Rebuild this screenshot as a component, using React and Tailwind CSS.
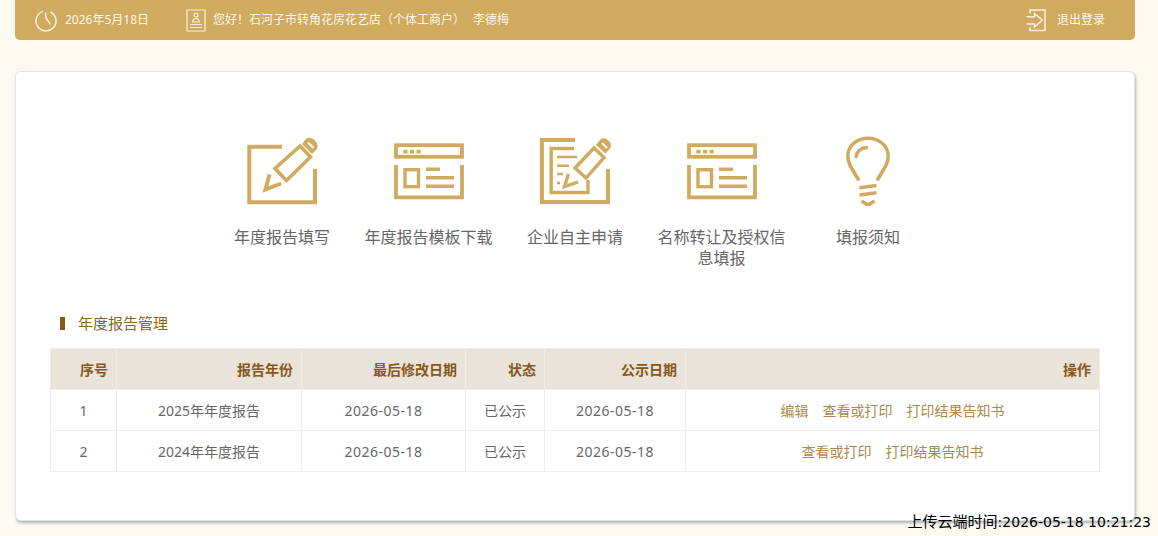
import React from "react";

const font = { fontFamily: '"Noto Sans", "Noto Sans CJK SC", sans-serif' };

function IconEdit() {
  return (
    <svg width="72" height="70" viewBox="246 136 72 70" fill="none" stroke="#d0ab5f" strokeWidth="4">
      <path d="M282 146.8H249.3V202.3H315V169" />
      <path d="M275 168.5L300 146L310.5 157L286.5 180.5Z" strokeWidth="3.6" />
      <path d="M269.5 174.5L265.5 189.5L281 183.5" strokeWidth="4" />
      <path d="M302 144L306 139Q309.5 136.5 314 139.5Q319 144 317 149L312 154Z" fill="#d0ab5f" stroke="none" />
      <path d="M308 142.5L313.5 148" stroke="#fff" strokeWidth="2.2" />
    </svg>
  );
}

function IconPage() {
  return (
    <svg width="72" height="70" viewBox="392 136 72 70" fill="none" stroke="#d0ab5f" strokeWidth="3.8">
      <rect x="395" y="145.2" width="66" height="11.6" />
      <path d="M402.3 151.7h4.2M409 151.7h4.2M415.5 151.7h4.2" strokeWidth="3.8" />
      <path d="M395 165V197.3H461V165" />
      <rect x="404" y="169.7" width="13.5" height="17" strokeWidth="3.4" />
      <path d="M425 169.3H439M425 177.8H453M425 186.2H453" strokeWidth="3.4" />
    </svg>
  );
}

function IconForm() {
  return (
    <svg width="72" height="70" viewBox="539 136 72 70" fill="none" stroke="#d0ab5f" strokeWidth="4">
      <path d="M575 140H541.9V202H608V169" />
      <path d="M574 148.5H551.2V192.5H588V180" strokeWidth="3.4" />
      <path d="M557 157H577M557 165.7H569M557 174H563M557 183H560" strokeWidth="2.4" />
      <path d="M575 168L594 148L604 157.5L586 178Z" strokeWidth="3.4" />
      <path d="M568.5 174L564.5 186.5L578 182" strokeWidth="3.4" />
      <path d="M596 145L600.5 139.5Q604 137 608 140Q612.5 144 610 148.5L605.5 153.5Z" fill="#d0ab5f" stroke="none" />
      <path d="M602 143L607 148" stroke="#fff" strokeWidth="1.8" />
    </svg>
  );
}

function IconBulb() {
  return (
    <svg width="48" height="70" viewBox="844.5 136 48 70" fill="none" stroke="#d0ab5f" strokeWidth="3.6" strokeLinecap="round">
      <path d="M859.5 180.5L851 166.5C846 156 849 148 854 143.5C862 136.5 875 136.5 883 143.5C888 148 891 156 886 166.5L877.5 180.5" strokeLinecap="butt" />
      <path d="M856.7 156.5C857 152 861 148 867 147.5" />
      <path d="M860 187.7L877 185.5M860 195L877 192.8" strokeLinecap="butt" />
      <path d="M862 201L868.5 205L875 201" strokeLinecap="butt" />
    </svg>
  );
}

const tiles = [
  { icon: <IconEdit />, label: "年度报告填写" },
  { icon: <IconPage />, label: "年度报告模板下载" },
  { icon: <IconForm />, label: "企业自主申请" },
  { icon: <IconPage />, label: "名称转让及授权信息填报" },
  { icon: <IconBulb />, label: "填报须知" },
];

const rows = [
  { n: "1", year: "2025年年度报告", ops: ["编辑", "查看或打印", "打印结果告知书"] },
  { n: "2", year: "2024年年度报告", ops: ["查看或打印", "打印结果告知书"] },
];

const th = "border border-[#f0ece6] pr-[8px] text-right text-[14px] font-bold text-[#87581a]";
const td = "border border-[#efefef] text-center text-[14px] text-[#666666]";

export default function App() {
  return (
    <div className="relative h-[536px] overflow-hidden bg-[#fcf9f1]" style={font}>
      <header className="ml-[15px] mr-[23px] flex h-10 items-center rounded-b-[5px] bg-[#cfaa5f] pl-5 pr-[30px] text-[12px] text-[#fdf8ec]">
        <svg width="24" height="24" viewBox="0 0 24 24" fill="none" stroke="#fbf3df" strokeWidth="1.5" className="mt-[2px] -ml-[1px]">
          <path d="M9 2.4A10 10 0 1 0 16.5 3" />
          <path d="M11.5 3.5L12 9L16.5 15.5" />
        </svg>
        <span className="ml-[7px]">2026年5月18日</span>
        <svg width="20" height="23" viewBox="0 0 20 23" fill="none" stroke="#fbf3df" strokeWidth="1.2" className="ml-[37px] mt-[1px]">
          <path d="M1 1H19V22H1Z" />
          <circle cx="10" cy="6" r="2" />
          <path d="M6.5 13C7 10 8 9.5 10 9.5C12 9.5 13 10 13.5 13Z" />
          <path d="M4 15.5H16M4 18.5H16" />
        </svg>
        <span className="ml-[7px]">您好！石河子市转角花房花艺店（个体工商户）</span>
        <span className="ml-[8px]">李德梅</span>
        <button className="ml-auto flex items-center text-[12px]">
          <svg width="20" height="23" viewBox="1026.5 9 20 23" fill="none" stroke="#fbf3df" strokeWidth="1.5" className="mt-[1px]">
            <path d="M1030.5 13V10H1045.5V30.5H1030.5V27.5" />
            <path d="M1027 16.7H1035V13.5L1042.7 20L1035 27V24H1027" />
          </svg>
          <span className="ml-[11px]">退出登录</span>
        </button>
      </header>

      <main className="ml-[15px] mr-[23px] mt-[31px] h-[450px] rounded-[6px] border border-[#dde8e6] bg-white px-[34px] pt-[64px] shadow-[1px_2px_3px_#aeb1b6]">
        <ul className="flex justify-center">
          {tiles.map((t) => (
            <li key={t.label} className="flex w-[146.5px] flex-col items-center px-[8px] text-center">
              <div className="flex h-[70px] items-center">{t.icon}</div>
              <p className="mt-[21px] text-[16px] leading-[21px] text-[#666666]">{t.label}</p>
            </li>
          ))}
        </ul>

        <h2 className="mt-[44px] ml-[10px] flex items-center text-[15px] leading-5 text-[#8a6425]">
          <span className="mt-[1px] h-[13px] w-[5px] bg-[#87581a]" />
          <span className="ml-[13px]">年度报告管理</span>
        </h2>

        <table className="mt-[15px] w-[1050px] table-fixed border-collapse">
          <colgroup>
            <col className="w-[66px]" />
            <col className="w-[185px]" />
            <col className="w-[164px]" />
            <col className="w-[79px]" />
            <col className="w-[141px]" />
            <col />
          </colgroup>
          <thead>
            <tr className="h-[41px] bg-[#e9e3d9]">
              {["序号", "报告年份", "最后修改日期", "状态", "公示日期", "操作"].map((h) => (
                <th key={h} className={th}>{h}</th>
              ))}
            </tr>
          </thead>
          <tbody>
            {rows.map((r) => (
              <tr key={r.n} className="h-[41px]">
                <td className={td}>{r.n}</td>
                <td className={td}>{r.year}</td>
                <td className={`${td} tracking-[0.5px]`}>2026-05-18</td>
                <td className={td}>已公示</td>
                <td className={`${td} tracking-[0.5px]`}>2026-05-18</td>
                <td className={td}>
                  <div className="flex justify-center gap-[14px] text-[#ab8a4c]">
                    {r.ops.map((o) => (
                      <a key={o}>{o}</a>
                    ))}
                  </div>
                </td>
              </tr>
            ))}
          </tbody>
        </table>
      </main>

      <div
        className="absolute bottom-[4px] right-[7px] text-[14px] leading-5 text-black"
        style={{ fontFamily: '"DejaVu Sans", "Noto Sans CJK SC", sans-serif' }}
      >
        <span className="text-[15px]">上传云端时间</span>:2026-05-18 10:21:23
      </div>
    </div>
  );
}
